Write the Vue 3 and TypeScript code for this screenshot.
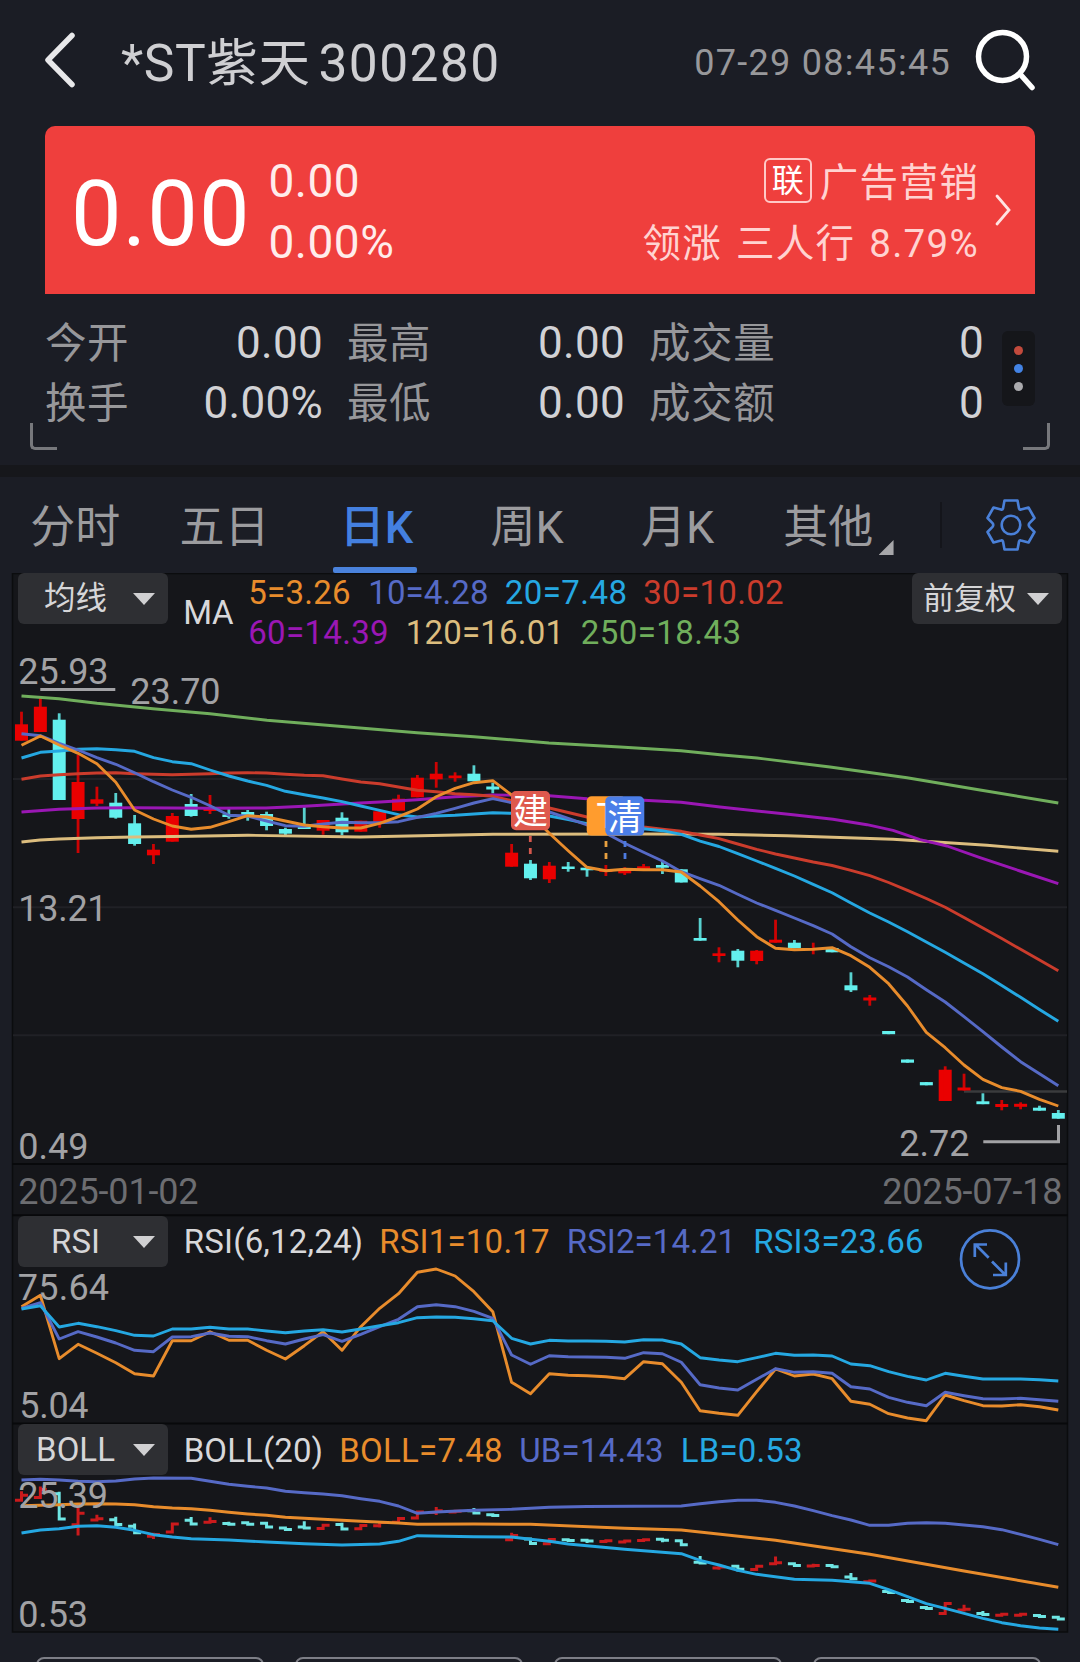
<script setup lang="ts">
interface Label {
  text: string
  x: number
  y: number
  w: number
  size?: number
  color?: string
}

type Candle = [dir: number, bodyTop: number, bodyBottom: number, high: number, low: number]

const FIRST_X = 21.5
const STEP = 18.851
const xAt = (i: number): number => FIRST_X + STEP * i

const series = (ys: number[]): string => ys.map((y, i) => `${xAt(i).toFixed(1)},${y}`).join(' ')
const sparse = (pts: [number, number][]): string => pts.map(([i, y]) => `${xAt(i).toFixed(1)},${y}`).join(' ')

const RED = '#ea0000'
const CYAN = '#63f0ee'
const ORANGE = '#e88c2c'
const INDIGO = '#566ac6'
const SKY = '#25a8e2'
const CRIMSON = '#cb3c2c'
const PURPLE = '#9a17b4'
const GREEN = '#70ae5c'
const SAND = '#dcbd7e'

// direction (1 = up, 0 = down), body top, body bottom, high, low
const candles: Candle[] = [
  [1, 724.3, 740.7, 711.7, 740.7], [1, 706.7, 732, 696.7, 732], [0, 719.7, 800, 713.3, 800],
  [1, 782, 819, 755, 853], [1, 799.3, 803.7, 786.7, 806], [0, 802.7, 817.7, 793, 818.7],
  [0, 823.3, 844, 815, 845.7], [1, 849.7, 855.3, 844, 864], [1, 816, 841.7, 813, 841.7],
  [0, 804, 816, 794, 816.7], [1, 808, 811, 795, 814], [0, 814.5, 817, 809, 818.7],
  [0, 812, 817, 810, 820.7], [0, 814, 826, 811.7, 830.3], [0, 829, 833.7, 827.7, 835.3],
  [0, 826, 829, 807.3, 829], [1, 820, 830.7, 820, 834.7], [0, 817.7, 832.3, 812.3, 835.3],
  [1, 820.7, 831.7, 820.7, 831.7], [1, 811.3, 821.7, 811.3, 827.7], [1, 798.7, 810.7, 794.7, 810.7],
  [1, 777.7, 797.3, 775, 797.3], [1, 773.7, 779.3, 762, 787.7], [1, 775.5, 778.2, 772.3, 781.7],
  [0, 773.7, 781.3, 765.3, 781.3], [0, 786.5, 789.5, 782.7, 793.3], [1, 852.7, 866.7, 844, 866.7],
  [0, 863.7, 878.3, 860, 880], [1, 865.7, 879.3, 862, 883], [0, 866.5, 869, 862, 871.7],
  [0, 867.7, 870.3, 867.7, 876.7], [1, 869.5, 872, 865, 876], [1, 870.7, 873.3, 867.3, 875],
  [1, 866.3, 868.8, 864, 871], [0, 865, 867.7, 861.7, 874], [0, 869.3, 882.5, 869.3, 882.5],
  [0, 938, 940.7, 918, 940.7], [1, 953.3, 956, 947.3, 962.3], [0, 950.7, 960.7, 949, 967.3],
  [1, 950.7, 961, 950, 964.3], [1, 939.7, 942.7, 919.7, 942.7], [0, 942.7, 948.3, 940, 948.3],
  [1, 948, 950, 942.7, 954.3], [0, 948, 952.3, 947, 952.3], [0, 985.3, 990.3, 972.3, 992],
  [1, 997.5, 1000.5, 995, 1005.7], [0, 1031, 1034.2, 1031, 1034.2], [0, 1059.5, 1062.7, 1059.5, 1062.7],
  [0, 1082.1, 1085.3, 1082.1, 1085.3], [1, 1069.7, 1101, 1066.3, 1101], [1, 1087.5, 1090.5, 1073.7, 1090.5],
  [0, 1101.3, 1104.2, 1093.3, 1104.2], [1, 1104, 1107, 1100, 1110.3], [1, 1103.8, 1106.8, 1102.3, 1109.3],
  [0, 1107.7, 1110.7, 1105.7, 1110.7], [0, 1113, 1118.7, 1110, 1118.7],
]

const maLines = [
  { color: GREEN, points: '21.5,696 59,698.7 97,703.3 153,708.7 210,713.7 267,720.3 360,728 417,732.7 474,736.7 549,743 620,747 681,750.7 720,754.7 757,758 830,767 907,777.7 980,790 1058.3,803' },
  { color: SAND, points: '21.5,842 40,840 59,839 97,837.7 134,837 191,836.3 248,835.3 360,837 493,834.3 643,834 720,834.3 787,835.7 893,839.3 987,845.3 1058.3,851.3' },
  { color: PURPLE, points: '21.5,812 59,809.3 97,808 134,807.7 210,808.3 266,808 304,806.3 360,803 380,802 417,799.7 455,796.7 493,795 530,795.3 549,795.7 587,798.7 644,800.3 681,802.3 720,807 757,811 793,814.7 833,819.3 867,824.7 893,830.3 920,839.7 947,846 980,857.7 1020,871 1058.3,883.7' },
  { color: CRIMSON, points: series([779.3, 776, 774.7, 773.7, 773, 772.7, 773.7, 774.3, 774.7, 774.3, 773.7, 773, 772.7, 773, 774.3, 775.3, 775.7, 779, 782, 783.7, 787, 790.3, 791.7, 793.7, 794.7, 796.3, 800.7, 804.3, 808, 812.5, 817, 820.5, 824, 827, 829.3, 831.3, 835, 838.7, 844, 849.3, 854, 858, 862, 865.5, 870.3, 875.7, 882.5, 890.3, 898.5, 907.3, 917.5, 928, 938.5, 949.3, 960, 970.7]) },
  { color: SKY, points: series([758, 752.3, 751, 749.3, 748.7, 749.7, 751.3, 757.7, 761.7, 763.7, 770, 776, 781, 785.3, 791.3, 794.7, 798, 801.7, 806, 810.3, 814.7, 817, 816, 815.3, 814, 812.7, 813.3, 814, 816, 819.7, 823.7, 826, 827.7, 828.7, 830.7, 834.3, 841.2, 846.5, 853.7, 861, 868.3, 876, 884.3, 892.7, 903, 913, 922, 931.7, 942, 952.3, 963, 973.7, 985.5, 997.3, 1009.5, 1021.3]) },
  { color: INDIGO, points: series([733.7, 735.7, 743.3, 750, 757.7, 764.3, 772.7, 781.7, 790, 797.3, 805.7, 815.3, 816, 821, 825.7, 826.3, 824, 822.3, 822.7, 822.7, 821.7, 817.3, 813.3, 808.3, 803, 798.7, 802.7, 806.7, 812, 818.3, 825, 833.3, 843.3, 852.3, 861, 871.7, 878.7, 885.3, 894.3, 903, 910.3, 918, 925.7, 934, 946.7, 957.7, 966.7, 977, 989.7, 1002, 1016.7, 1031.7, 1047, 1061.7, 1073.7, 1085.7]) },
  { color: ORANGE, points: series([745.3, 736, 745, 753.3, 763.7, 782.3, 810, 819, 826, 829.3, 827.3, 821.7, 815.7, 817, 821, 825, 826.7, 828, 828, 823.3, 816.7, 809, 796.7, 788.3, 782.7, 780.7, 795, 814, 833.3, 850.7, 867.3, 870.7, 869.3, 869.7, 869.7, 872, 886, 901.7, 920, 936.7, 948.3, 949.7, 949.3, 947.7, 955.7, 967.3, 983.7, 1006, 1032.3, 1047.7, 1065, 1079.3, 1087.7, 1091.3, 1099.3, 1106]) },
]

const rsiLines = [
  { color: ORANGE, points: series([1306.7, 1295.3, 1358.7, 1344.3, 1353.3, 1362.7, 1373.7, 1376, 1340.7, 1340.7, 1331.7, 1340.3, 1340.3, 1350.3, 1359, 1345.7, 1331.7, 1350.3, 1326.7, 1308.3, 1293.7, 1272.3, 1269, 1276, 1291.7, 1311.7, 1382.3, 1393.7, 1373.7, 1375.3, 1375.7, 1376.7, 1378.7, 1361.7, 1363.7, 1382.3, 1410.7, 1413.3, 1415.3, 1391.7, 1369, 1376, 1374, 1378.7, 1401.3, 1404.3, 1413.7, 1418, 1420.7, 1395, 1400.7, 1405.7, 1406, 1404.7, 1406.7, 1410]) },
  { color: INDIGO, points: series([1308.3, 1302.7, 1339, 1331.7, 1337, 1343, 1350.3, 1351.7, 1337, 1336.7, 1333, 1336.3, 1336.7, 1340.7, 1344, 1339, 1334.7, 1341.3, 1334.3, 1326.7, 1319.3, 1306.7, 1304.7, 1306.7, 1311.3, 1318.3, 1355, 1364.3, 1355.7, 1356.7, 1357, 1357.3, 1358.3, 1352.7, 1353.7, 1362.3, 1384.7, 1388, 1390, 1379.3, 1368.7, 1372.3, 1371.7, 1373.3, 1386.7, 1389, 1397.3, 1402.3, 1405.7, 1392.3, 1395.7, 1398.7, 1399, 1398.3, 1399.7, 1401.3]) },
  { color: SKY, points: series([1309, 1305.7, 1327, 1323.3, 1326.7, 1330.7, 1335.3, 1336, 1329, 1329, 1327.3, 1329, 1329, 1331, 1332.7, 1331, 1329.7, 1332, 1329, 1325.7, 1322.7, 1317.7, 1317, 1317.3, 1318.7, 1320.7, 1338.3, 1344, 1340.3, 1341, 1341, 1341.3, 1342, 1339.7, 1340, 1344, 1357.7, 1360, 1361.7, 1357.7, 1353.3, 1355.3, 1355, 1356, 1364, 1365.7, 1371.7, 1376.3, 1380, 1373.3, 1376.3, 1379, 1379, 1379, 1379.7, 1381]) },
]

const bollLines = [
  { color: INDIGO, points: sparse([[0, 1480], [1, 1479.3], [2, 1480], [3, 1481.3], [4, 1481.7], [5, 1481], [6, 1479], [7, 1478], [9, 1478.3], [10, 1481.3], [11, 1484.3], [12, 1486.3], [13, 1488], [14, 1491.3], [15, 1492.7], [16, 1494], [17, 1495.7], [18, 1498.7], [19, 1501.3], [20, 1506], [21, 1513.3], [22, 1512], [24, 1510.3], [26, 1509.3], [28, 1507.3], [30, 1506.5], [35, 1506], [36, 1503.7], [37, 1501.7], [38, 1500.3], [39, 1500.3], [40, 1502.3], [41, 1506], [42, 1510.7], [43, 1515.7], [44, 1520], [45, 1525.3], [46, 1525.3], [47, 1523.3], [48, 1522.7], [49, 1523.3], [50, 1525], [51, 1526.7], [52, 1529.7], [53, 1534.3], [54, 1539.3], [55, 1544.7]]) },
  { color: ORANGE, points: sparse([[0, 1505.7], [2, 1504.7], [3, 1504], [4, 1503.7], [5, 1504], [6, 1504.7], [7, 1506.7], [8, 1508], [9, 1508.7], [10, 1510.3], [11, 1512.3], [12, 1514], [13, 1515.3], [14, 1517.3], [16, 1519.3], [18, 1521.3], [20, 1523], [21, 1524.3], [24, 1524], [27, 1524.3], [32, 1528.3], [35, 1530], [40, 1540.3], [45, 1554.3], [50, 1571], [55, 1587.3]]) },
  { color: SKY, points: sparse([[0, 1533], [1, 1530], [2, 1528.7], [3, 1526.3], [4, 1525.7], [5, 1527.3], [6, 1530.3], [7, 1534.7], [8, 1537], [9, 1538.7], [11, 1540], [13, 1542], [15, 1543.7], [17, 1545], [19, 1544], [20, 1541.3], [21, 1535.7], [24, 1536.7], [26, 1537], [27, 1539.3], [28, 1541.3], [29, 1544], [32, 1549.3], [35, 1553.7], [36, 1560.3], [37, 1565], [38, 1570.3], [39, 1574.3], [41, 1579.3], [43, 1580.3], [45, 1583.3], [46, 1589.7], [47, 1596.7], [48, 1603.7], [49, 1608.3], [51, 1618.3], [52, 1622.7], [53, 1625.7], [54, 1628], [55, 1629.3]]) },
]

// Price bars of the BOLL panel share the candles, on a flatter scale
const toBoll = (y: number): number => 1532 + (y - 841.7) * 0.314
const bars = candles.map(([dir, top, bottom, high, low], i) => {
  const x = xAt(i)
  const a = toBoll(top)
  const b = toBoll(bottom)
  const open = dir ? b : a
  const close = dir ? a : b
  return {
    color: dir ? '#cb1a1c' : '#6fe6e4',
    d: `M${x - 6.5} ${open}H${x + 1.5}M${x - 1.5} ${close}H${x + 6.5}M${x} ${toBoll(high)}V${toBoll(low)}`,
  }
})

const GREY = '#a2a2a5'
const LIGHT = '#d8d8da'
const labels: Label[] = [
  { text: 'MA', x: 185, y: 624, w: 47, color: LIGHT },
  { text: '5=3.26', x: 250, y: 604, w: 99, color: ORANGE },
  { text: '10=4.28', x: 370, y: 604, w: 117, color: INDIGO },
  { text: '20=7.48', x: 506.5, y: 604, w: 119, color: SKY },
  { text: '30=10.02', x: 645, y: 604, w: 137, color: CRIMSON },
  { text: '60=14.39', x: 250, y: 643.8, w: 137, color: PURPLE },
  { text: '120=16.01', x: 407.5, y: 643.8, w: 155, color: SAND },
  { text: '250=18.43', x: 582.5, y: 643.8, w: 157, color: GREEN },
  { text: '25.93', x: 20, y: 683.5, w: 87, size: 36 },
  { text: '23.70', x: 132, y: 703.5, w: 87, size: 36 },
  { text: '13.21', x: 20, y: 921, w: 86, size: 36 },
  { text: '0.49', x: 20, y: 1158.5, w: 67, size: 36 },
  { text: '2.72', x: 901, y: 1155.5, w: 67, size: 36 },
  { text: '2025-01-02', x: 20, y: 1203.5, w: 177, size: 36, color: '#6c6d71' },
  { text: '2025-07-18', x: 884, y: 1203.5, w: 177, size: 36, color: '#6c6d71' },
  { text: 'RSI(6,12,24)', x: 185.5, y: 1252.7, w: 176, color: LIGHT },
  { text: 'RSI1=10.17', x: 381, y: 1252.7, w: 167, color: ORANGE },
  { text: 'RSI2=14.21', x: 568.5, y: 1252.7, w: 166, color: INDIGO },
  { text: 'RSI3=23.66', x: 755, y: 1252.7, w: 167, color: SKY },
  { text: '75.64', x: 19.5, y: 1299.5, w: 88, size: 36 },
  { text: '5.04', x: 21, y: 1417.5, w: 66, size: 36 },
  { text: 'BOLL(20)', x: 185.5, y: 1462, w: 136, color: LIGHT },
  { text: 'BOLL=7.48', x: 341, y: 1462, w: 160, color: ORANGE },
  { text: 'UB=14.43', x: 521, y: 1462, w: 141, color: INDIGO },
  { text: 'LB=0.53', x: 682.5, y: 1462, w: 118.5, color: SKY },
  { text: '25.39', x: 20, y: 1508, w: 86.5, size: 36 },
  { text: '0.53', x: 20, y: 1627, w: 66.5, size: 36 },
]

const selects = [
  { name: 'ma', text: '均线' },
  { name: 'adjust', text: '前复权' },
  { name: 'rsi', text: 'RSI' },
  { name: 'boll', text: 'BOLL' },
]

const stats = [
  [{ k: '今开', v: '0.00' }, { k: '换手', v: '0.00%' }],
  [{ k: '最高', v: '0.00' }, { k: '最低', v: '0.00' }],
  [{ k: '成交量', v: '0' }, { k: '成交额', v: '0' }],
]

const tabs = ['分时', '五日', '日K', '周K', '月K', '其他']
const activeTab = '日K'
</script>

<template>
  <div class="screen">
    <header class="topbar">
      <svg class="back" width="34" height="60" viewBox="0 0 34 60">
        <path d="M29 5.500 5 30 29 54.500" fill="none" stroke="#e8e8ea" stroke-width="5.500" stroke-linecap="round" stroke-linejoin="round" />
      </svg>
      <h1 class="title"><span class="name">*ST紫天</span><span>300280</span></h1>
      <time class="clock">07-29 08:45:45</time>
      <svg class="search" width="64" height="66" viewBox="0 0 64 66">
        <circle cx="28.500" cy="28.500" r="24" fill="none" stroke="#fff" stroke-width="5.500" />
        <path d="M46 46 58 59.500" fill="none" stroke="#fff" stroke-width="5.500" stroke-linecap="round" />
      </svg>
    </header>

    <section class="banner">
      <strong class="price">0.00</strong>
      <div class="change">
        <span>0.00</span>
        <span>0.00%</span>
      </div>
      <div class="sector">
        <div class="line"><i class="tag">联</i><span>广告营销</span></div>
        <div class="line">领涨 三人行 8.79%</div>
      </div>
      <svg class="more" width="20" height="36" viewBox="0 0 20 36">
        <path d="M4 4 16 18 4 32" fill="none" stroke="#ffe3e2" stroke-width="2.800" stroke-linecap="round" />
      </svg>
    </section>

    <section class="stats">
      <dl v-for="(col, c) in stats" :key="c" class="col">
        <div v-for="s in col" :key="s.k" class="stat">
          <dt>{{ s.k }}</dt>
          <dd>{{ s.v }}</dd>
        </div>
      </dl>
      <div class="dots"><i class="dot red" /><i class="dot blue" /><i class="dot grey" /></div>
      <i class="corner left" />
      <i class="corner right" />
    </section>

    <nav class="tabs">
      <button v-for="t in tabs" :key="t" class="tab" :class="{ active: t === activeTab, drop: t === '其他' }">{{ t }}</button>
      <span class="split" />
      <svg class="gear" width="54" height="54" viewBox="-27 -27 54 54">
        <path
          d="M-6.500 -24.500H6.500L8 -16.500Q8.500 -15 10 -15.500L17.500 -17.500L23.500 -7L18.500 -1.800Q17 0 18.500 1.800L23.500 7L17.500 17.500L10 15.500Q8.500 15 8 16.500L6.500 24.500H-6.500L-8 16.500Q-8.500 15 -10 15.500L-17.500 17.500L-23.500 7L-18.500 1.800Q-17 0 -18.500 -1.800L-23.500 -7L-17.500 -17.500L-10 -15.500Q-8.500 -15 -8 -16.500Z"
          fill="none" stroke="#4a80d8" stroke-width="2.600" stroke-linejoin="round"
        />
        <circle r="9.300" fill="none" stroke="#4a80d8" stroke-width="2.600" />
      </svg>
    </nav>

    <main class="charts">
      <svg class="canvas" width="1080" height="1060" viewBox="0 573 1080 1060">
        <rect x="12.500" y="573.500" width="1055" height="1058.500" fill="#15161a" stroke="#0b0c0e" stroke-width="1.500" />
        <g stroke="#202126" stroke-width="2">
          <path d="M13 779H1067M13 907.300H1067M13 1035.300H1067" />
        </g>
        <g stroke="#08090b" stroke-width="2">
          <path d="M12 1164H1068M12 1215.300H1068M12 1423.500H1068" />
        </g>
        <path d="M964 1091.500H1067" stroke="#3a3b3d" stroke-width="2.500" />

        <g v-for="(c, i) in candles" :key="i" :fill="c[0] ? RED : CYAN">
          <rect :x="xAt(i) - 6.5" :y="c[1]" width="13" :height="c[2] - c[1]" />
          <rect :x="xAt(i) - 1.4" :y="c[3]" width="2.800" :height="c[4] - c[3]" opacity="0.860" />
        </g>

        <polyline v-for="l in maLines" :key="l.color" class="curve" :points="l.points" :stroke="l.color" />
        <polyline v-for="l in rsiLines" :key="l.color" class="curve" :points="l.points" :stroke="l.color" />
        <path v-for="(b, i) in bars" :key="i" :d="b.d" :stroke="b.color" stroke-width="3" fill="none" />
        <polyline v-for="l in bollLines" :key="l.color" class="curve" :points="l.points" :stroke="l.color" />

        <g fill="none" :stroke="GREY" stroke-width="3">
          <path d="M40.300 689.500H115.300" />
          <path d="M983.300 1141.700H1058.500V1125" />
        </g>

        <g fill="none" stroke-width="2.800" stroke-dasharray="6 6">
          <path d="M530.300 836V856" stroke="#d4574c" />
          <path d="M606 841V859" stroke="#e8a040" />
          <path d="M625 841V859" stroke="#4d7be0" />
        </g>
        <g class="marker">
          <rect x="511" y="791" width="39" height="39.300" rx="5" fill="#de594d" />
          <text x="530.500" y="824" font-size="35">建</text>
          <rect x="586.700" y="796.300" width="39" height="39.300" rx="5" fill="#ff9c2e" />
          <text x="607" y="828" font-size="35">T</text>
          <rect x="605.300" y="796.300" width="39" height="39.300" rx="5" fill="#4b7ee8" />
          <text x="625" y="829.500" font-size="35">清</text>
        </g>

        <text
          v-for="l in labels" :key="l.text + l.y" :x="l.x - 1.8" :y="l.y" :textLength="l.w + 3.4"
          :font-size="l.size ?? 33" :fill="l.color ?? GREY"
        >{{ l.text }}</text>

        <g fill="none" stroke="#4a80d8" stroke-width="2.700">
          <circle cx="990" cy="1259.300" r="29" />
          <path d="M988.700 1257.700 975.500 1244.500M974.800 1257V1244.500H987M992 1261.500 1005 1274.500M1005.800 1262.500V1275H993" />
        </g>
      </svg>
      <button v-for="s in selects" :key="s.name" class="select" :class="s.name">
        <span class="caption">{{ s.text }}</span><i class="caret" />
      </button>
    </main>

    <footer class="cards">
      <div v-for="n in 4" :key="n" class="card" />
    </footer>
  </div>
</template>

<style>
body {
  margin: 0;
  background: #1b1d25;
}
</style>

<style scoped>
.screen {
  width: 1080px;
  height: 1662px;
  overflow: hidden;
  background: #1b1d25;
  font-family: Roboto, "Noto Sans CJK SC", sans-serif;
  color: #d5d5d8;
}
button {
  border: 0;
  padding: 0;
  background: none;
  font: inherit;
  color: inherit;
}
i {
  font-style: normal;
}
.topbar {
  display: flex;
  align-items: center;
  height: 120px;
  padding: 0 42px;
}
.back {
  flex: none;
  margin-left: 1px;
}
.title {
  display: flex;
  gap: 8px;
  margin: 7px 0 0 44px;
  font-size: 51.500px;
  line-height: 70px;
  font-weight: 400;
  letter-spacing: 1.400px;
  white-space: nowrap;
  color: #cfcfd2;
}
.name {
  letter-spacing: 0.600px;
}
.clock {
  margin: 6px 0 0 auto;
  font-size: 36px;
  letter-spacing: 1.300px;
  white-space: nowrap;
  color: #98989b;
}
.search {
  flex: none;
  margin: 1px 0 0 23px;
}
.banner {
  display: flex;
  align-items: center;
  box-sizing: border-box;
  height: 168px;
  margin: 6px 45px 0;
  padding: 3px 22px 0 26px;
  border-radius: 10px 10px 0 0;
  background: #ef3f3d;
  color: #ffe3e2;
}
.price {
  margin-top: 7px;
  font-size: 90px;
  line-height: 100px;
  font-weight: 400;
  letter-spacing: 1px;
  color: #fff;
}
.change {
  display: flex;
  flex-direction: column;
  margin: 1px 0 0 18px;
  font-size: 46px;
  line-height: 61px;
  letter-spacing: 0.500px;
  color: #ffeceb;
}
.sector {
  margin: 3px 0 0 auto;
  font-size: 38.500px;
  line-height: 61px;
  letter-spacing: 1.300px;
  word-spacing: 3px;
  color: #ffd3d1;
}
.line {
  display: flex;
  justify-content: flex-end;
  align-items: center;
  height: 61px;
  white-space: pre;
}
.tag {
  box-sizing: border-box;
  width: 48px;
  height: 45px;
  margin: -5px 8px 0 0;
  border: 2px solid #ffc9c7;
  border-radius: 6px;
  font-size: 32px;
  line-height: 42px;
  letter-spacing: 0;
  text-align: center;
  color: #fff;
}
.more {
  flex: none;
  margin: -3px 0 0 14px;
}
.stats {
  position: relative;
  display: flex;
  box-sizing: border-box;
  height: 171px;
  padding: 19px 45px 0;
}
.col {
  width: 278px;
  margin: 0 24px 0 0;
}
.col:nth-child(3) {
  width: 335px;
  margin-right: 0;
}
.stat {
  display: flex;
  justify-content: space-between;
  height: 60px;
  line-height: 60px;
}
.stat dt {
  padding-top: 1px;
  font-size: 41.500px;
  letter-spacing: 0.600px;
  color: #97979a;
}
.stat dd {
  margin: 0;
  font-size: 44px;
  letter-spacing: 0.300px;
  color: #d2d2d5;
}
.dots {
  display: flex;
  flex-direction: column;
  align-items: center;
  justify-content: center;
  gap: 9px;
  width: 33px;
  height: 75px;
  margin: 18px 0 0 auto;
  border-radius: 6px;
  background: #15161a;
}
.dot {
  width: 9px;
  height: 9px;
  border-radius: 50%;
}
.dot.red {
  background: #c24a3c;
}
.dot.blue {
  background: #4383e4;
}
.dot.grey {
  background: #ababae;
}
.corner {
  position: absolute;
  top: 129px;
  box-sizing: border-box;
  width: 27px;
  height: 27px;
  border: solid #77787c;
}
.corner.left {
  left: 30px;
  border-width: 0 0 3px 3px;
  border-bottom-left-radius: 5px;
}
.corner.right {
  right: 30px;
  border-width: 0 3px 3px 0;
  border-bottom-right-radius: 5px;
}
.tabs {
  display: flex;
  align-items: center;
  height: 96px;
  border-top: 12px solid #16171b;
}
.tab {
  position: relative;
  width: 150.600px;
  height: 96px;
  padding-top: 6px;
  font-size: 45px;
  line-height: 90px;
  letter-spacing: 0;
  text-align: center;
  color: #9c9c9f;
}
.tab:nth-child(2) {
  text-indent: -3px;
}
.tab.active {
  font-weight: 500;
  color: #4480e0;
}
.tab.active::after {
  content: "";
  position: absolute;
  left: 32px;
  bottom: 0;
  z-index: 1;
  width: 84px;
  height: 6px;
  border-radius: 2px;
  background: #4a82dc;
}
.tab.drop::after {
  content: "";
  position: absolute;
  right: 10px;
  bottom: 18px;
  width: 15px;
  height: 15px;
  background: #a6a6a9;
  clip-path: polygon(100% 0, 100% 100%, 0 100%);
}
.split {
  width: 2px;
  height: 46px;
  margin-left: 36px;
  background: #14151b;
}
.gear {
  margin-left: 42px;
}
.charts {
  position: relative;
  height: 1060px;
}
.canvas {
  display: block;
}
.curve {
  fill: none;
  stroke-width: 2.9;
  stroke-linejoin: round;
}
.marker text {
  fill: #fff;
  text-anchor: middle;
}
.select {
  position: absolute;
  left: 18px;
  display: flex;
  align-items: center;
  box-sizing: border-box;
  width: 150px;
  height: 51px;
  padding-right: 13px;
  border-radius: 6px;
  background: #2e2f33;
  color: #d6d6d8;
  font-size: 33px;
  line-height: 51px;
}
.caption {
  flex: 1;
  white-space: nowrap;
  text-align: center;
}
.caret {
  border: solid transparent;
  border-width: 12px 11.500px 0;
  border-top-color: #d0d0d2;
}
.select.ma {
  top: 0;
  font-size: 31.500px;
  line-height: 53px;
}
.select.adjust {
  top: 0;
  left: 912px;
  font-size: 31px;
  line-height: 53px;
}
.select.rsi {
  top: 643px;
}
.select.boll {
  top: 851px;
}
.cards {
  display: flex;
  gap: 31px;
  width: 1100px;
  margin: 24px 0 0 36px;
}
.card {
  flex: none;
  box-sizing: border-box;
  width: 228px;
  height: 60px;
  border: 2px solid #7d7e86;
  border-radius: 8px;
}
</style>
